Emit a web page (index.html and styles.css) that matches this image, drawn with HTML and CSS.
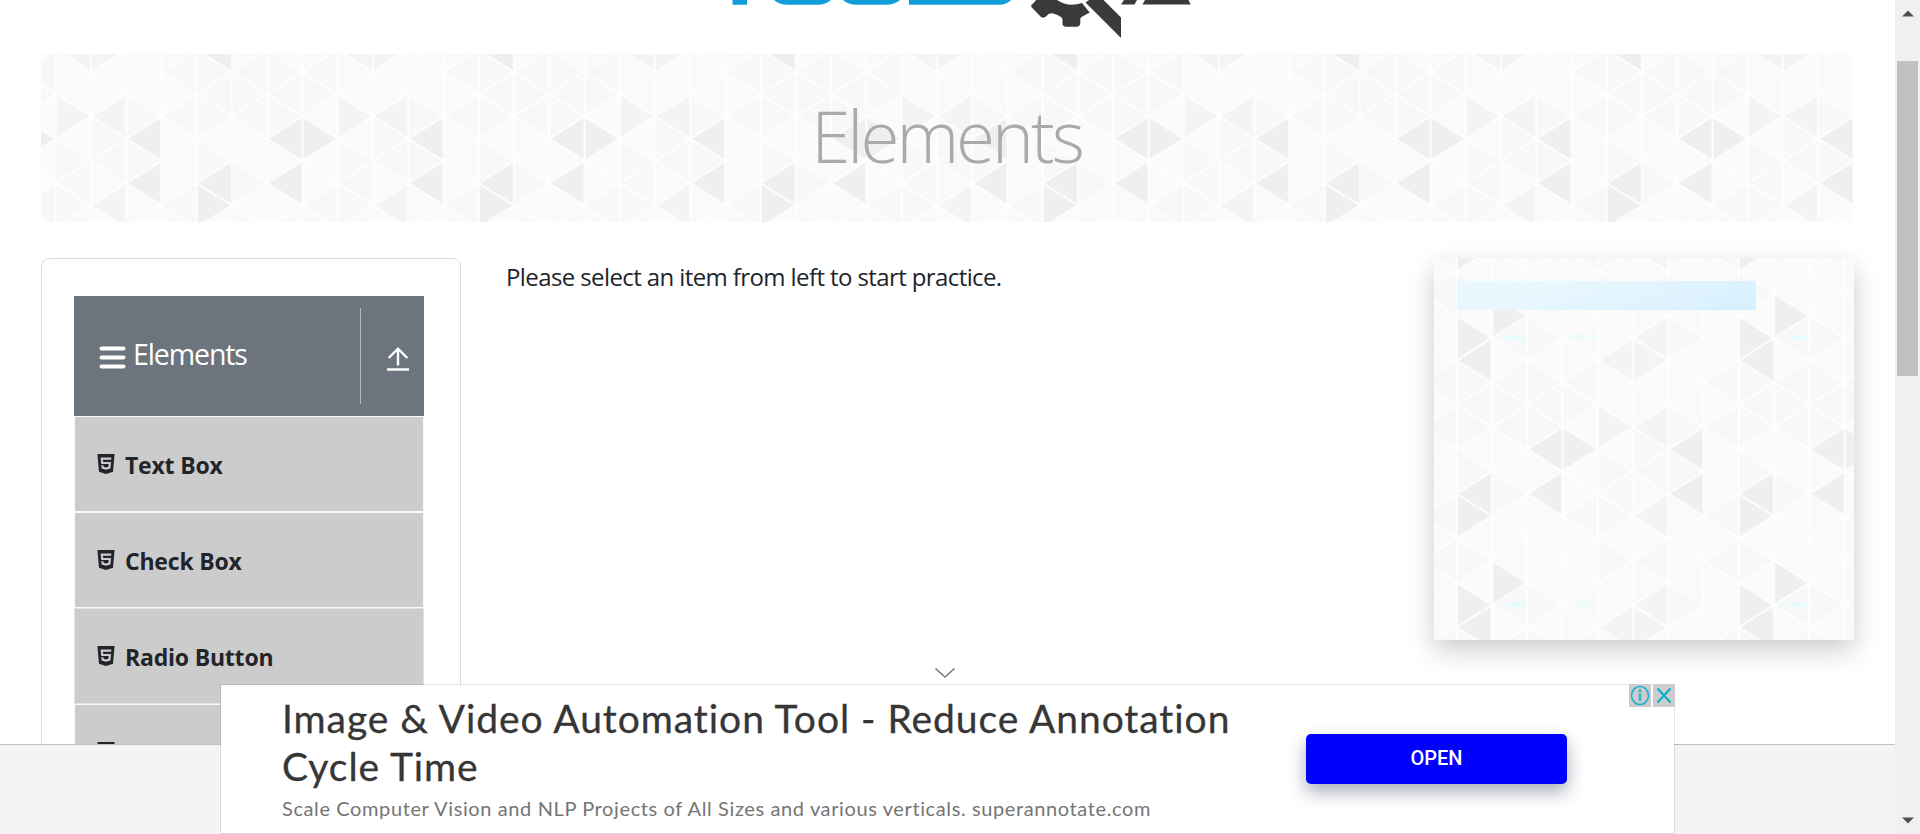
FILE: index.html
```
<!DOCTYPE html>
<html lang="en">
<head>
<meta charset="utf-8">
<title>Elements</title>
<link rel="stylesheet" href="styles.css">
</head>
<body>
<svg class="defs" width="0" height="0" aria-hidden="true">
  <defs>
    <radialGradient id="glow"><stop offset="0" stop-color="#d4fffe"/><stop offset="1" stop-color="#e4fffe" stop-opacity="0"/></radialGradient>
    <g id="tile">
      <rect width="282" height="267" fill="#fafafa"/>
      <g transform="scale(35.25 22.25)">
        <path fill="#f8f8f8" d="M1 3L2 4L1 5zM3 3L4 4L3 5zM1 7L2 8L1 9zM5 5L6 6L5 7zM0 4L1 5L0 6zM2 4L3 5L2 6zM6 4L7 5L6 6zM0 6L1 7L0 8zM4 6L5 7L4 8zM4 8L5 9L4 10zM6 6L7 7L6 8zM0 10L1 11L0 12zM4 10L5 11L4 12zM2 2L3 3L2 4zM0 2L1 3L0 4zM6 0L7 1L6 2zM2 0L3 1L2 2zM0 4L1 3V5zM1 3L2 2V4zM1 5L2 4V6zM7 5L8 4V6zM3 3L4 2V4zM7 11L8 10V12zM5 11L6 10V12zM7 3L8 2V4zM2 4L3 3V5zM5 7L6 6V8zM3 9L4 8V10zM7 9L8 8V10zM4 8L5 7V9zM1 1L2 0V2z"/>
        <path fill="#fbfbfb" d="M0 6L1 5V7zM1 9L2 8V10zM2 2L3 1V3zM4 6L5 5V7zM3 7L4 6V8zM3 7L4 8L3 9zM0 10L1 9V11zM3 5L4 4V6zM5 3L6 2V4zM1 7L2 6V8zM5 9L6 10L5 11zM2 10L3 11L2 12zM6 2L7 1V3zM6 10L7 9V11zM0 0L1 -1V1zM0 12L1 11V13zM7 3L8 4L7 5z"/>
        <path fill="#f4f4f4" d="M4 4L5 5L4 6zM5 5L6 4V6zM4 2L5 1V3zM5 1L6 2L5 3zM5 1L6 0V2zM5 9L6 8V10z"/>
        <path fill="#efefef" d="M0 0L1 1L0 2zM0 2L1 1V3zM1 -1L2 0L1 1zM1 11L2 12L1 13zM0 8L1 7V9zM0 8L1 9L0 10zM2 6L3 5V7zM3 5L4 6L3 7zM2 8L3 7V9zM6 6L7 5V7zM6 8L7 7V9z"/>
      </g>
      <ellipse cx="58" cy="22" rx="16" ry="3" fill="url(#glow)"/>
      <ellipse cx="125" cy="21" rx="18" ry="5" fill="url(#glow)" opacity=".5"/>
      <path fill="none" stroke="#fefefe" stroke-width="2" d="M0 0V267M35.25 0V267M70.5 0V267M105.75 0V267M141 0V267M176.25 0V267M211.5 0V267M246.75 0V267M282 0V267M0 -178l282 178M0 -133.5l282 178M0 -89l282 178M0 -44.5l282 178M0 0l282 178M0 44.5l282 178M0 89l282 178M0 133.5l282 178M0 178l282 178M0 222.5l282 178M0 267l282 178M0 0l282 -178M0 44.5l282 -178M0 89l282 -178M0 133.5l282 -178M0 178l282 -178M0 222.5l282 -178M0 267l282 -178M0 311.5l282 -178M0 356l282 -178M0 400.5l282 -178M0 445l282 -178"/>
    </g>
    <pattern id="banner-tiles" patternUnits="userSpaceOnUse" x="155.7" y="-48.8" width="282" height="267"><use href="#tile"/></pattern>
    <pattern id="promo-tiles" patternUnits="userSpaceOnUse" x="22.8" y="57.8" width="282" height="267"><use href="#tile"/></pattern>
    <symbol id="html5" viewBox="0 32 384 448"><path d="M0 32l34.9 395.8L191.5 480l157.6-52.2L384 32H0zm308.2 127.9H124.4l4.1 49.4h175.6l-13.6 148.4-97.9 27v.3h-1.1l-98.7-27.3-6-75.8h47.7L138 320l53.5 14.5 53.7-14.5 6-62.2H84.3L71.5 112.2h241.1l-4.4 47.7z"/></symbol>
  </defs>
</svg>
<div class="window">
  <div class="page">
    <header class="top">
      <svg class="logo" viewBox="0 0 520 54">
        <g fill="#109fda"><path d="M32.5 0H47V4.7H32.5zM74 0Q79 4.7 88 4.7H117Q126 4.7 131 0zM143 0Q148 4.7 157 4.7H186Q195 4.7 200 0zM209 0H311Q307 4.7 299 4.7H209z"/></g>
        <g fill="#3a3a3a"><path d="M336 0Q334 3 331.300 5L331.300 7L341 17Q343.500 18.500 346 16.500Q349 12.500 353 13.500Q357 14 361 17Q362.500 18 362.500 20V24Q363 26.700 366 26.700H377Q379.700 26.700 380.300 24V19Q380.300 17.500 382 16.700L389.700 12.500L382 3Q368 7.500 357 0zM385.500 2.500L389 0H403.500L421 17.500V38zM421 4.500L424 0H437L434.500 4.500zM442.500 4.500L445 0H488.500L490.700 4.500z"/></g>
      </svg>
    </header>
    <section class="banner">
      <svg class="tiles"><rect width="100%" height="100%" fill="url(#banner-tiles)"/></svg>
      <h1 class="banner-title">Elements</h1>
    </section>
    <main class="columns">
      <aside class="sidebar">
        <div class="group">
          <svg class="burger" viewBox="0 0 27 23"><path stroke="#fff" stroke-width="4" stroke-linecap="round" d="M2.500 2.500H24.500M2.500 11.500H24.500M2.500 20.500H24.500"/></svg>
          <span class="group-name">Elements</span>
          <span class="group-toggle"><svg class="upload" viewBox="0 0 22 24"><path fill="none" stroke="#fff" stroke-width="2.400" d="M11 18.500V2M1.700 11L11 1.700L20.300 11M0 22.500H22"/></svg></span>
        </div>
        <ul class="menu">
          <li class="item"><svg class="item-icon"><use href="#html5"/></svg><span class="label">Text Box</span></li>
          <li class="item"><svg class="item-icon"><use href="#html5"/></svg><span class="label">Check Box</span></li>
          <li class="item item-edge"><svg class="item-icon"><use href="#html5"/></svg><span class="label">Radio Button</span></li>
          <li class="item"><svg class="item-icon"><use href="#html5"/></svg></li>
        </ul>
      </aside>
      <p class="hint"><span class="hint-text">Please select an item from left to start practice.</span></p>
      <aside class="promo">
        <svg class="tiles"><rect width="100%" height="100%" fill="url(#promo-tiles)"/></svg>
        <div class="promo-bar"></div>
      </aside>
    </main>
    <footer class="footer"></footer>
  </div>
  <div class="scrollbar">
    <svg class="arrow" viewBox="0 0 12 7"><path fill="#505050" d="M0 6.500L6 .5L12 6.500z"/></svg>
    <div class="thumb"></div>
    <svg class="arrow" viewBox="0 0 12 7"><path fill="#505050" d="M0 .5L6 6.500L12 .5z"/></svg>
  </div>
</div>
<svg class="chevron" viewBox="0 0 20 10"><path fill="none" stroke="#777" stroke-width="1.500" d="M.5 .5L10 9L19.500 .5"/></svg>
<div class="ad">
  <div class="ad-copy">
    <div class="ad-title">Image &amp; Video Automation Tool - Reduce Annotation<br>Cycle Time</div>
    <div class="ad-text">Scale Computer Vision and NLP Projects of All Sizes and various verticals. superannotate.com</div>
  </div>
  <div class="ad-button">OPEN</div>
  <div class="ad-controls">
    <svg class="control" viewBox="0 0 22 23"><g fill="none" stroke="#22b3cf"><ellipse cx="11" cy="11.500" rx="8.500" ry="9" stroke-width="1.700"/><path stroke-width="2.400" d="M11 9.500V17M11 5.500V8"/></g></svg>
    <svg class="control" viewBox="0 0 22 23"><path fill="none" stroke="#00aecd" stroke-width="2" d="M4.500 4.500L17.500 18.500M17.500 4.500L4.500 18.500"/></svg>
  </div>
</div>
</body>
</html>
```
FILE: styles.css
```
* { box-sizing: border-box; }
body { margin: 0; height: 834px; overflow: hidden; position: relative; background: #fff; color: #212529; font-family: "Open Sans", "Noto Sans", sans-serif; }
.defs { position: absolute; }
.window { display: flex; height: 834px; }
.page { width: 1895px; display: flex; flex-direction: column; }
.top { height: 54px; flex: none; padding-left: 700px; }
.logo { display: block; width: 520px; height: 54px; }
.banner { position: relative; flex: none; height: 168px; margin: 0 41px; display: flex; justify-content: center; overflow: hidden; }
.tiles { position: absolute; left: 0; top: 0; width: 100%; height: 100%; }
.banner-title { position: relative; margin: 0; padding: 29px 2px 0 0; font-size: 71px; line-height: 106px; font-weight: 300; color: #aaa; letter-spacing: -3px; white-space: nowrap; }
.columns { display: flex; height: 522px; flex: none; padding: 36px 41px 0; overflow: hidden; }
.sidebar { width: 420px; height: 560px; flex: none; border: 1px solid #dcdcdc; border-radius: 8px; padding: 37px 36px 0 32px; }
.group { width: 350px; height: 120px; background: #6c757d; color: #fff; display: flex; align-items: center; padding-left: 25px; }
.burger { width: 27px; height: 23px; margin: 3px 7px 0 0; }
.group-name { font-size: 28.5px; line-height: 40px; letter-spacing: -1.1px; flex: 1; padding-bottom: 4px; }
.group-toggle { width: 64px; height: 96px; border-left: 1px solid #b8b8b8; display: flex; align-items: center; padding-left: 26px; }
.upload { width: 22px; height: 24px; margin-top: 5px; }
.menu { list-style: none; margin: 0; padding: 0; width: 350px; }
.item { height: 96px; border: 1px solid #f8f8f8; background: #ccc; display: flex; align-items: center; padding-left: 22px; font-weight: 700; font-size: 23px; }
.item-edge { border-color: #dfe3e6; }
.item-icon { width: 18px; height: 20px; fill: #212529; margin: -1px 10px 0 0; }
.label { white-space: nowrap; letter-spacing: -.2px; padding-top: 2px; }
.hint { margin: 0; flex: 1; padding: 0 0 0 45px; font-size: 24px; line-height: 38px; }
.hint-text { white-space: nowrap; letter-spacing: -.6px; }
.promo { position: relative; width: 420px; height: 382px; flex: none; padding: 23px; box-shadow: 0 10px 25px rgba(0,0,0,.2); }
.promo-bar { position: relative; width: 299px; height: 29px; background: linear-gradient(160deg, #e9f7ff 30%, #d6f0fe); }
.footer { flex: 1; background: #f4f4f4; border-top: 1px solid #bfbfbf; }
.scrollbar { width: 25px; background: #f0f0f0; display: flex; flex-direction: column; align-items: center; padding: 10px 0; }
.arrow { width: 12px; height: 7px; flex: none; }
.thumb { width: 21px; height: 315px; margin: 44px 0 auto; background: #c1c1c1; }
.chevron { position: absolute; left: 935px; top: 668px; width: 20px; height: 10px; }
.ad { position: absolute; left: 220px; top: 684px; width: 1455px; height: 150px; border: 1px solid rgba(0,0,0,.1); background: #fff; background-clip: padding-box; display: flex; font-family: Lato, sans-serif; font-variant-ligatures: none; }
.ad-copy { width: 1085px; padding: 9px 0 0 61px; white-space: nowrap; }
.ad-title { color: #363636; font-size: 39px; line-height: 48px; letter-spacing: .95px; -webkit-text-stroke: .3px #363636; }
.ad-text { color: #757575; font-size: 20px; line-height: 30px; margin-top: 3px; letter-spacing: .61px; }
.ad-button { width: 261px; height: 50px; margin-top: 49px; border-radius: 5px; background: #00f; color: #fff; font: 500 20px/49px Roboto, sans-serif; text-align: center; box-shadow: 0 8px 18px rgba(40,50,80,.4); }
.ad-controls { position: absolute; right: -1px; top: -1px; display: flex; gap: 2px; }
.control { width: 22px; height: 23px; background: #ccc; }
```
